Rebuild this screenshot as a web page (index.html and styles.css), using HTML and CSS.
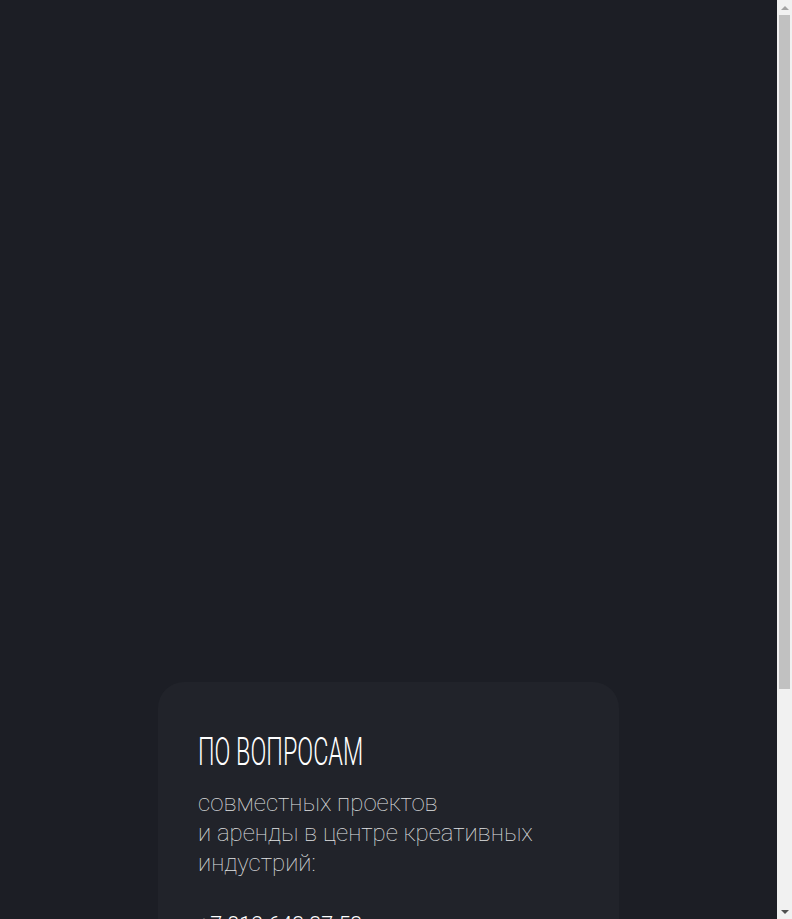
FILE: index.html
```html
<!DOCTYPE html>
<html>

<head>
    <title>Контакты</title>
    <link rel="stylesheet" href="styles.css">
</head>

<body>
    <div class="page">
        <!-- empty hero area above the contact card -->
        <div class="hero"></div>

        <div class="contact-card">
            <h2 class="contact-title"><span>По вопросам</span></h2>
            <p class="contact-text">
                совместных проектов<br>
                и аренды в центре креативных<br>
                индустрий:
            </p>
            <a class="contact-phone" href="tel:+78126433753">+7 812 643 37 53</a>
            <a class="contact-mail" href="#">info@example.ru</a>
        </div>
    </div>

    <!-- window scrollbar -->
    <div class="scrollbar">
        <div class="scroll-btn"><span class="arrow-up"></span></div>
        <div class="scroll-track"><div class="scroll-thumb"></div></div>
        <div class="scroll-btn"><span class="arrow-down"></span></div>
    </div>
</body>

</html>
```
FILE: styles.css
```css
/* Base page */
body {
    margin: 0 15px 0 0;
    background: #1c1e25;
    font-family: Roboto, "Liberation Sans", sans-serif;
    color: #fff;
}

.page {
    display: flex;
    flex-direction: column;
    align-items: center;
    padding-bottom: 60px;
}

.hero {
    height: 682px;
    width: 100%;
}

/* Contact card */
.contact-card {
    width: 461px;
    box-sizing: border-box;
    padding: 48px 40px 60px;
    background: #21232a;
    border-radius: 26px;
    display: flex;
    flex-direction: column;
}

.contact-title {
    margin: 0;
    font-size: 39px;
    line-height: 44px;
    font-weight: 300;
    text-transform: uppercase;
    white-space: nowrap;
}

.contact-title span {
    display: inline-block;
    transform: scaleX(0.6);
    transform-origin: left center;
}

.contact-text {
    margin: 14px 0 0;
    font-size: 24px;
    line-height: 30px;
    font-weight: 100;
    color: #e2e3e5;
}

.contact-phone,
.contact-mail {
    display: block;
    color: #fff;
    text-decoration: none;
    font-size: 21.5px;
    line-height: 30px;
    font-weight: 300;
}

.contact-phone {
    margin-top: 32px;
}

.contact-mail {
    margin-top: 10px;
}

/* Window scrollbar */
.scrollbar {
    position: fixed;
    top: 0;
    right: 0;
    bottom: 0;
    width: 15px;
    background: #f1f1f1;
    display: flex;
    flex-direction: column;
}

.scroll-btn {
    height: 15px;
    display: flex;
    align-items: center;
    justify-content: center;
}

.arrow-up,
.arrow-down {
    width: 0;
    height: 0;
    border-left: 4px solid transparent;
    border-right: 4px solid transparent;
}

.arrow-up {
    border-bottom: 4px solid #a3a3a3;
}

.arrow-down {
    border-top: 4px solid #505050;
}

.scroll-track {
    flex: 1;
}

.scroll-thumb {
    height: 674px;
    margin: 0 2px;
    background: #c1c1c1;
}
```
